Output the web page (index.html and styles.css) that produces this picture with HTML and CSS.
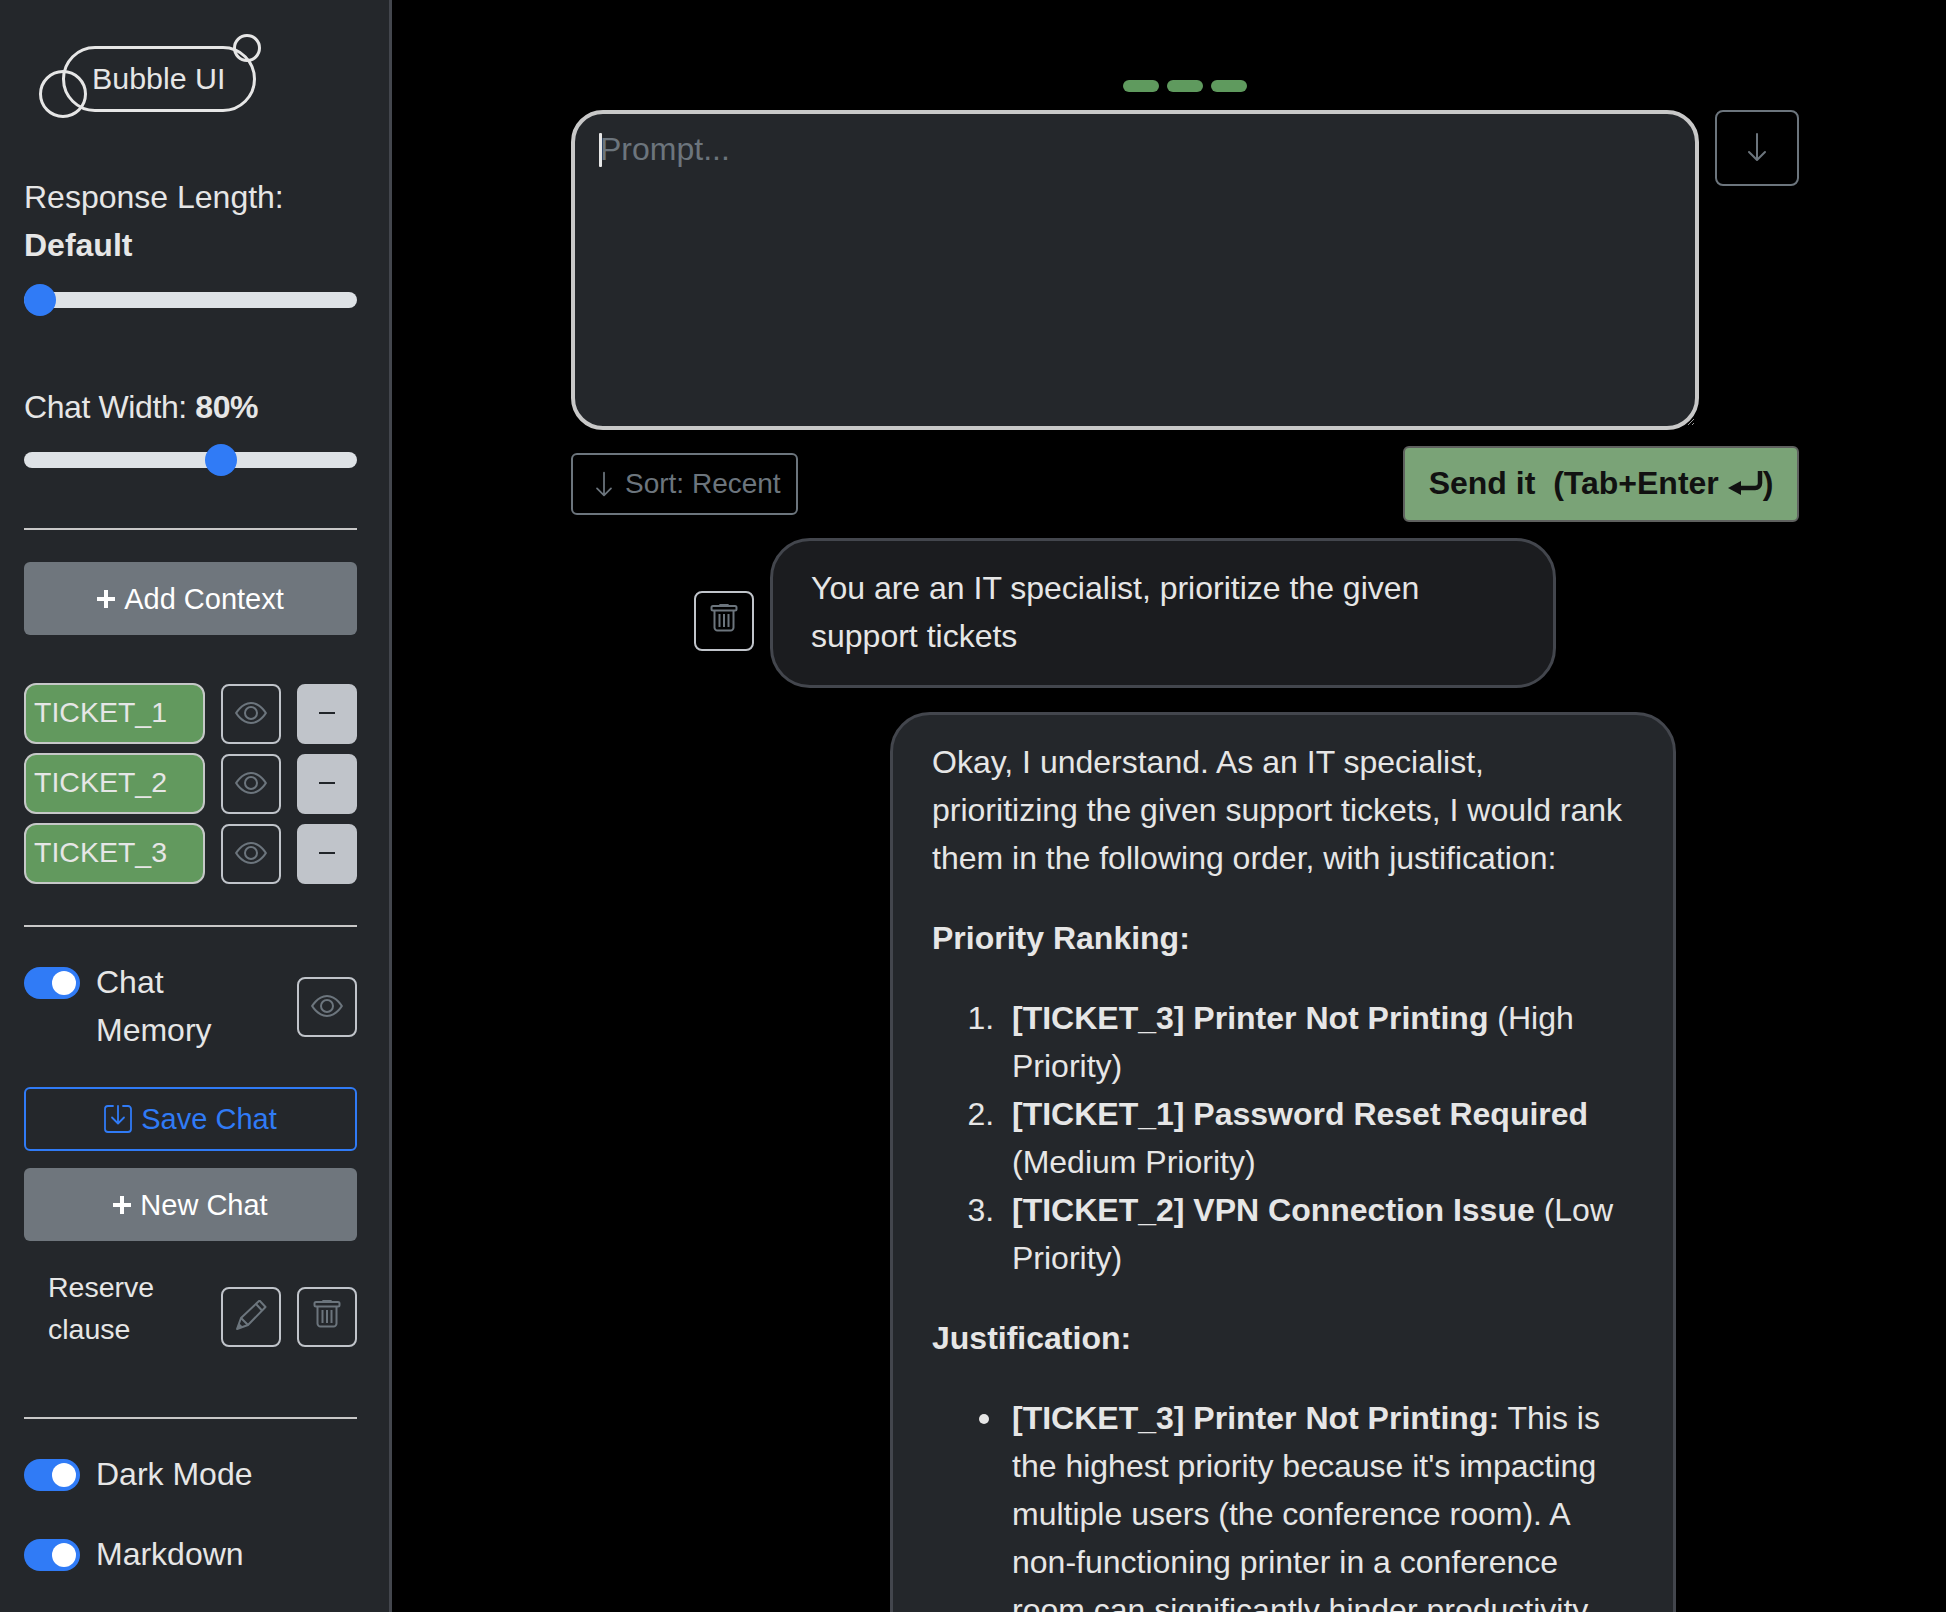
FILE: index.html
```html
<!DOCTYPE html>
<html lang="en">
<head>
    <meta charset="UTF-8">
    <meta name="viewport" content="width=device-width, initial-scale=1.0">
    <title>Bubble UI</title>
    <link rel="stylesheet" href="styles.css">
</head>
<body>
    <svg class="sprite" xmlns="http://www.w3.org/2000/svg">
        <symbol id="i-eye" viewBox="0 0 16 16">
            <path fill="currentColor" d="M16 8s-3-5.5-8-5.5S0 8 0 8s3 5.5 8 5.5S16 8 16 8zM1.173 8a13.133 13.133 0 0 1 1.66-2.043C4.12 4.668 5.88 3.5 8 3.5c2.12 0 3.879 1.168 5.168 2.457A13.133 13.133 0 0 1 14.828 8c-.058.087-.122.183-.195.288-.335.48-.83 1.12-1.465 1.755C11.879 11.332 10.119 12.5 8 12.5c-2.12 0-3.879-1.168-5.168-2.457A13.134 13.134 0 0 1 1.172 8z"/>
            <path fill="currentColor" d="M8 5.5a2.5 2.5 0 1 0 0 5 2.5 2.5 0 0 0 0-5zM4.5 8a3.5 3.5 0 1 1 7 0 3.5 3.5 0 0 1-7 0z"/>
        </symbol>
        <symbol id="i-down" viewBox="0 0 16 16">
            <path fill="currentColor" fill-rule="evenodd" d="M8 1a.5.5 0 0 1 .5.5v11.793l3.146-3.147a.5.5 0 0 1 .708.708l-4 4a.5.5 0 0 1-.708 0l-4-4a.5.5 0 0 1 .708-.708L7.5 13.293V1.5A.5.5 0 0 1 8 1z"/>
        </symbol>
        <symbol id="i-trash" viewBox="0 3 28 32">
            <g fill="none" stroke="currentColor" stroke-width="2">
                <rect x="1.5" y="5" width="25" height="4.5" rx="1.5"/>
                <path d="M10 4.5c0-2 8-2 8 0"/>
                <path d="M4.5 10v16.500a3 3 0 0 0 3 3h13a3 3 0 0 0 3-3V10"/>
                <path d="M9.500 13v13M14 13v13M18.500 13v13"/>
            </g>
        </symbol>
        <symbol id="i-pencil" viewBox="0 1 32 32">
            <g fill="none" stroke="currentColor" stroke-width="2" stroke-linejoin="round">
                <path d="M2 30l4-11L24.500 1.500l6 6.500L13 26z"/>
                <path d="M6 19l7 7M21 5l6 6.500"/>
            </g>
            <path fill="currentColor" d="M2 30l2-6 4 4z"/>
        </symbol>
        <symbol id="i-save" viewBox="0 0 28 28">
            <g fill="none" stroke="currentColor" stroke-width="1.800" stroke-linecap="round" stroke-linejoin="round">
                <path d="M9 1H4a3 3 0 0 0-3 3v20a3 3 0 0 0 3 3h20a3 3 0 0 0 3-3V4a3 3 0 0 0-3-3h-5"/>
                <path d="M14 1v17M8 12.500l6 6 6-6"/>
            </g>
        </symbol>
        <symbol id="i-plus" viewBox="0 0 18 18">
            <path fill="none" stroke="currentColor" stroke-width="4" d="M9 0v18M0 9h18"/>
        </symbol>
    </svg>

    <div class="app">
        <aside class="sidebar">
            <div class="logo">
                <span class="logo-pill">Bubble UI</span>
                <span class="logo-big"></span>
                <span class="logo-small"></span>
            </div>

            <div class="label first-label">Response Length:<br><b>Default</b></div>
            <input class="slider" type="range" min="0" max="100" value="0">

            <div class="label width-label">Chat Width: <b>80%</b></div>
            <input class="slider width-slider" type="range" min="50" max="100" step="5" value="80">

            <hr class="rule rule-top">

            <button class="btn btn-grey add-context">
                <svg class="plus"><use href="#i-plus"/></svg>Add Context
            </button>

            <div class="tickets">
                <div class="ticket-row">
                    <button class="ticket">TICKET_1</button>
                    <button class="icon-btn"><svg class="icon"><use href="#i-eye"/></svg></button>
                    <button class="icon-btn minus"><span class="dash"></span></button>
                </div>
                <div class="ticket-row">
                    <button class="ticket">TICKET_2</button>
                    <button class="icon-btn"><svg class="icon"><use href="#i-eye"/></svg></button>
                    <button class="icon-btn minus"><span class="dash"></span></button>
                </div>
                <div class="ticket-row">
                    <button class="ticket">TICKET_3</button>
                    <button class="icon-btn"><svg class="icon"><use href="#i-eye"/></svg></button>
                    <button class="icon-btn minus"><span class="dash"></span></button>
                </div>
            </div>

            <hr class="rule rule-tickets">

            <div class="switch-row memory">
                <span class="toggle"></span>
                <span class="switch-label">Chat Memory</span>
                <button class="icon-btn push"><svg class="icon"><use href="#i-eye"/></svg></button>
            </div>

            <button class="btn btn-save"><svg class="save-icon"><use href="#i-save"/></svg>Save Chat</button>
            <button class="btn btn-grey new-chat"><svg class="plus"><use href="#i-plus"/></svg>New Chat</button>

            <div class="saved">
                <span class="saved-name">Reserve clause</span>
                <button class="icon-btn push"><svg class="icon"><use href="#i-pencil"/></svg></button>
                <button class="icon-btn"><svg class="icon"><use href="#i-trash"/></svg></button>
            </div>

            <hr class="rule rule-saved">

            <div class="switch-row dark-mode">
                <span class="toggle"></span>
                <span>Dark Mode</span>
            </div>
            <div class="switch-row markdown">
                <span class="toggle"></span>
                <span>Markdown</span>
            </div>
        </aside>

        <main class="main">
            <div class="dots">
                <span class="dot"></span>
                <span class="dot"></span>
                <span class="dot"></span>
            </div>

            <div class="prompt-row">
                <div class="prompt-wrap">
                    <textarea class="prompt" placeholder="Prompt..."></textarea>
                    <span class="caret"></span>
                </div>
                <button class="down-btn"><svg class="icon"><use href="#i-down"/></svg></button>
            </div>

            <div class="actions">
                <button class="sort-btn"><svg class="sort-icon"><use href="#i-down"/></svg>Sort: Recent</button>
                <button class="send-btn">Send it&nbsp; (Tab+Enter
                    <svg class="return-icon" viewBox="0 0 35 24">
                        <path fill="currentColor" d="M0 17l13-7v14z"/>
                        <path fill="none" stroke="currentColor" stroke-width="4.500" d="M12 17h15a5 5 0 0 0 5-5V0"/>
                    </svg>)</button>
            </div>

            <div class="user-row">
                <button class="icon-btn trash-btn"><svg class="icon"><use href="#i-trash"/></svg></button>
                <div class="bubble user-bubble">You are an IT specialist, prioritize the given support tickets</div>
            </div>

            <div class="bubble ai-bubble">
                <p>Okay, I understand. As an IT specialist, prioritizing the given support tickets, I would rank them in the following order, with justification:</p>
                <p><b>Priority Ranking:</b></p>
                <ol>
                    <li><b>[TICKET_3] Printer Not Printing</b> (High Priority)</li>
                    <li><b>[TICKET_1] Password Reset Required</b> (Medium Priority)</li>
                    <li><b>[TICKET_2] VPN Connection Issue</b> (Low Priority)</li>
                </ol>
                <p><b>Justification:</b></p>
                <ul>
                    <li><b>[TICKET_3] Printer Not Printing:</b> This is the highest priority because it's impacting multiple users (the conference room). A non-functioning printer in a conference room can significantly hinder productivity</li>
                </ul>
            </div>
        </main>
    </div>
</body>
</html>
```

FILE: styles.css
```css
* { box-sizing: border-box; }
html, body { height: 100%; margin: 0; overflow: hidden; }
body {
    font-family: "Liberation Sans", Arial, sans-serif;
    font-size: 32px;
    line-height: 48px;
    color: #e6e6e6;
    background-color: #000;
}
button { font-family: inherit; cursor: pointer; }
.sprite { display: none; }
.app { display: flex; height: 100vh; }

/* sidebar */
.sidebar {
    flex: 0 0 392px;
    padding: 34px 32px 0 24px;
    background-color: #24272b;
    border-right: 3px solid #43464d;
    overflow: hidden;
}
.logo { position: relative; height: 83px; }
.logo-pill {
    position: absolute;
    left: 38px;
    top: 12px;
    width: 194px;
    height: 66px;
    padding-left: 27px;
    font-size: 30.4px;
    line-height: 59px;
    border: 3px solid #e6e6e6;
    border-radius: 33px;
}
.logo-big, .logo-small {
    position: absolute;
    border: 3px solid #e6e6e6;
    border-radius: 50%;
}
.logo-big { left: 15px; top: 36px; width: 48px; height: 48px; }
.logo-small { left: 209px; top: 0; width: 28px; height: 28px; }

.first-label { margin-top: 56px; }
.width-label { margin-top: 67px; letter-spacing: -0.4px; }
.slider {
    display: block;
    width: 100%;
    height: 32px;
    margin: 15px 0 0;
    appearance: none;
    -webkit-appearance: none;
    background: transparent;
}
.width-slider { margin-top: 13px; }
.slider::-webkit-slider-runnable-track {
    height: 16px;
    background-color: #dee2e6;
    border-radius: 8px;
}
.slider::-webkit-slider-thumb {
    -webkit-appearance: none;
    width: 32px;
    height: 32px;
    margin-top: -8px;
    background-color: #307bf6;
    border-radius: 50%;
}

.rule { height: 2px; margin: 0; border: none; background-color: #c8c8c8; }
.rule-top { margin-top: 52px; }
.rule-tickets { margin-top: 41px; }
.rule-saved { margin-top: 67px; }

.btn {
    display: flex;
    align-items: center;
    justify-content: center;
    width: 100%;
    font-size: 29px;
    border-radius: 6px;
}
.btn-grey { padding-top: 2px; color: #fff; background-color: #6f767d; border: none; }
.plus { width: 18px; height: 18px; margin-right: 9px; }
.add-context { height: 73px; margin-top: 32px; }
.new-chat { height: 73px; margin-top: 17px; }
.btn-save {
    height: 64px;
    margin-top: 33px;
    color: #307bf6;
    background: transparent;
    border: 2px solid #307bf6;
}
.save-icon { width: 28px; height: 28px; margin-right: 9px; }

.tickets { display: flex; flex-direction: column; gap: 9px; margin-top: 48px; }
.ticket-row { display: flex; align-items: center; gap: 16px; }
.ticket {
    flex: 1;
    height: 61px;
    padding: 0 8px 3px;
    font-size: 28.5px;
    text-align: left;
    color: #e6e6e6;
    background-color: #62995e;
    border: 2px solid #c6c8c8;
    border-radius: 12px;
}
.icon-btn {
    display: flex;
    flex: 0 0 60px;
    align-items: center;
    justify-content: center;
    width: 60px;
    height: 60px;
    padding: 0 0 2px;
    color: #6c757d;
    background: transparent;
    border: 2px solid #c0c4ca;
    border-radius: 8px;
}
.icon { width: 32px; height: 32px; }
.minus { background-color: #c0c4ca; }
.dash { width: 16px; height: 2px; background-color: #212529; }

.switch-row { display: flex; align-items: flex-start; gap: 16px; }
.toggle {
    display: flex;
    flex: 0 0 56px;
    justify-content: flex-end;
    align-items: center;
    height: 32px;
    margin-top: 9px;
    padding-right: 4px;
    background-color: #307bf6;
    border-radius: 16px;
}
.toggle::after {
    content: "";
    width: 24px;
    height: 24px;
    background-color: #fff;
    border-radius: 50%;
}
.memory { margin-top: 31px; }
.switch-label { width: 140px; }
.push { margin-left: auto; }
.memory .icon-btn { align-self: center; margin-top: 2px; }
.dark-mode { margin-top: 31px; }
.markdown { margin-top: 32px; }

.saved { display: flex; align-items: flex-start; gap: 16px; margin-top: 25px; }
.saved-name { width: 140px; margin-left: 24px; font-size: 28.5px; line-height: 42px; }
.saved .icon-btn { margin-top: 21px; }
.saved .push { margin-left: auto; }

/* main column */
.main { flex: 1; min-width: 0; padding: 80px 147px 0 179px; overflow: hidden; }
.dots { display: flex; justify-content: center; gap: 8px; }
.dot { width: 36px; height: 12px; background-color: #5f9a5e; border-radius: 6px; }

.prompt-row { display: flex; align-items: flex-start; gap: 16px; margin-top: 18px; }
.prompt-wrap { position: relative; flex: 1; height: 320px; }
.prompt {
    display: block;
    width: 100%;
    height: 100%;
    padding: 11px 25px;
    font-family: inherit;
    font-size: 32px;
    line-height: 48px;
    color: #e6e6e6;
    background-color: #24272b;
    border: 4px solid #c8c8c8;
    border-radius: 32px;
    outline: none;
}
.prompt::placeholder { color: #6c757d; opacity: 1; }
.caret {
    position: absolute;
    left: 28px;
    top: 23px;
    width: 3px;
    height: 34px;
    background-color: #e6e6e6;
    border-radius: 1px;
}
.down-btn {
    display: flex;
    flex: 0 0 84px;
    align-items: center;
    justify-content: center;
    height: 76px;
    padding: 0 0 2px;
    color: #6c757d;
    background: transparent;
    border: 2px solid #6c757d;
    border-radius: 8px;
}

.actions {
    display: flex;
    align-items: center;
    justify-content: space-between;
    margin-top: 16px;
}
.sort-btn {
    display: flex;
    align-items: center;
    height: 62px;
    padding: 0 15px 0 17px;
    font-size: 28px;
    color: #6c757d;
    background: transparent;
    border: 2px solid #6c757d;
    border-radius: 6px;
}
.sort-icon { width: 28px; height: 28px; margin-right: 7px; }
.send-btn {
    width: 396px;
    height: 76px;
    padding: 0 0 2px;
    font-size: 32px;
    font-weight: 700;
    color: #111;
    background-color: #7aa377;
    border: 2px solid #5f615f;
    border-radius: 6px;
}
.return-icon { width: 35px; height: 24px; vertical-align: -1px; }

.bubble { border: 3px solid #43464d; border-radius: 40px; }
.user-row { display: flex; gap: 16px; margin: 16px 0 0 123px; }
.trash-btn { align-self: center; margin-top: 16px; }
.user-bubble {
    width: 786px;
    padding: 23px 38px 25px;
    background-color: #1b1c1f;
}
.ai-bubble {
    width: 786px;
    margin: 24px 0 0 319px;
    padding: 23px 38px 23px 39px;
    background-color: #24272b;
}
.ai-bubble p { margin: 0 0 32px; }
.ai-bubble ol, .ai-bubble ul { margin: 0 0 32px; padding-left: 80px; }
.ai-bubble ol li::marker { content: counter(list-item) ".\00a0\00a0"; }
.ai-bubble ul { list-style: none; }
.ai-bubble ul li { position: relative; }
.ai-bubble ul li::before {
    content: "";
    position: absolute;
    left: -33px;
    top: 20px;
    width: 10px;
    height: 10px;
    background-color: #e6e6e6;
    border-radius: 50%;
}
```
